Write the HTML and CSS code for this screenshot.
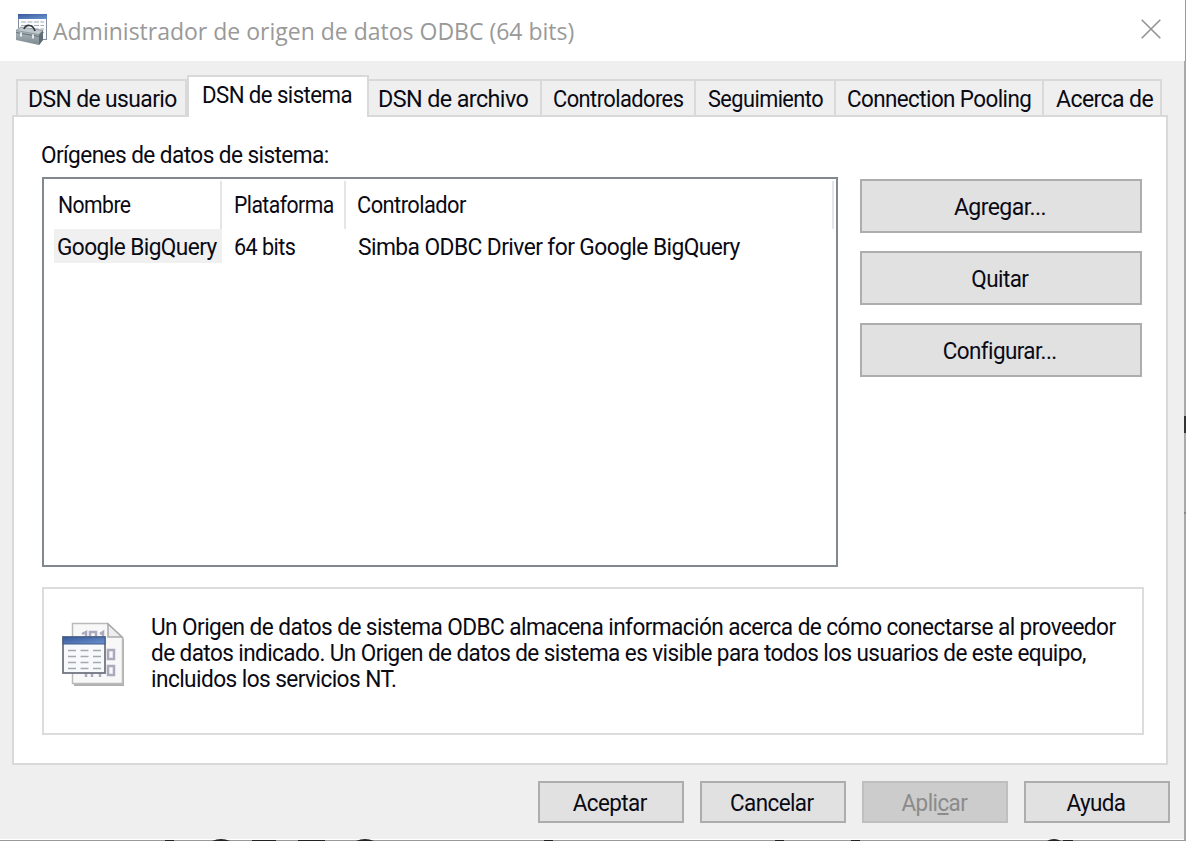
FILE: index.html
```html
<!DOCTYPE html>
<html lang="es">
<head>
<meta charset="utf-8">
<title>Administrador de origen de datos ODBC (64 bits)</title>
<link rel="stylesheet" href="styles.css">
</head>
<body>
<div class="window">
  <header class="titlebar">
    <svg class="app-icon" viewBox="0 0 33 34">
      <defs>
        <linearGradient id="blue" x1="0" x2="1" y1="0" y2="1"><stop offset="0" stop-color="#38599b"/><stop offset="1" stop-color="#6b93cf"/></linearGradient>
        <linearGradient id="steel" x1="0" x2="0" y1="0" y2="1"><stop offset="0" stop-color="#b4c0c5"/><stop offset="1" stop-color="#7d8a90"/></linearGradient>
      </defs>
      <rect x="2.500" y="1.500" width="28" height="25" fill="#fbfcfe" stroke="#858da0"/>
      <rect x="2" y="1" width="29" height="5" fill="url(#blue)"/>
      <path d="M5 9h23M5 12.500h23M5 16h23M5 19.500h23" stroke="#a3a8ad" stroke-dasharray="5 1.500"/>
      <path d="M0 17l5-3 22 3v10l-4 5-23-5z" fill="url(#steel)"/>
      <path d="M0 17.500l5-3.500 22 3.500-4 4z" fill="#bec8cc" stroke="#7d898e" stroke-width=".6"/>
      <path d="M23 21.500l4-4v9.500l-4 5z" fill="#5f6c73"/>
      <path d="M0 19.500l23 4 4-3" stroke="#687479" fill="none"/>
      <path d="M8 16c2-5 9-5 11 2" fill="none" stroke="#333b40" stroke-width="1.700"/>
      <path d="M5 19.500v4M17 21.500v4" stroke="#eef2f4" stroke-width="1.800"/>
    </svg>
    <h1 class="title">Administrador de origen de datos ODBC (64 bits)</h1>
    <svg class="close" viewBox="0 0 20 20"><path d="M.7.7l18.600 18.600M19.300.7L.7 19.300" stroke="#949494" stroke-width="1.600"/></svg>
  </header>
  <main class="body">
    <nav class="tabs">
      <div class="tab t1"><span>DSN de usuario</span></div>
      <div class="tab t2 active"><span>DSN de sistema</span></div>
      <div class="tab t3"><span>DSN de archivo</span></div>
      <div class="tab t4"><span>Controladores</span></div>
      <div class="tab t5"><span>Seguimiento</span></div>
      <div class="tab t6"><span>Connection Pooling</span></div>
      <div class="tab t7"><span>Acerca de</span></div>
    </nav>
    <section class="page">
      <div class="label"><span>Orígenes de datos de sistema:</span></div>
      <div class="sources">
        <div class="list">
          <div class="row head">
            <div class="cell c1"><span>Nombre</span></div>
            <div class="cell c2"><span>Plataforma</span></div>
            <div class="cell c3"><span>Controlador</span></div>
          </div>
          <div class="row item">
            <div class="cell c1"><span>Google BigQuery</span></div>
            <div class="cell c2"><span>64 bits</span></div>
            <div class="cell c3"><span>Simba ODBC Driver for Google BigQuery</span></div>
          </div>
        </div>
        <div class="actions">
          <button class="btn add"><span>Agregar...</span></button>
          <button class="btn"><span>Quitar</span></button>
          <button class="btn"><span>Configurar...</span></button>
        </div>
      </div>
      <div class="info">
        <svg class="info-icon" viewBox="0 0 64 66">
          <path d="M12 3h36l14 14v47H12z" fill="#b0b0b0"/>
          <path d="M10.500 1.500h35l15 14v46h-50z" fill="#f8f8f8" stroke="#bbb" stroke-width="1.500"/>
          <path d="M46 2v13h14z" fill="#eee" stroke="#aaa" stroke-width="1.500"/>
          <g fill="none" stroke="#aaa9bd" stroke-width="2.500"><path d="M20 12l4-2v10M38 12l3-2v10M28 10h6v9h-6zM46 28h6v9h-6zM46 44h6v9h-6zM24 50v5M30 50v5M38 50v5"/></g>
          <rect x="1" y="15" width="42" height="36" fill="#f7fafc" stroke="#707581" stroke-width="1.800"/>
          <rect x="1" y="15" width="42" height="7" fill="url(#blue)" stroke="#405a8c"/>
          <path d="M6 28.500h33M6 34.500h33M6 40.500h33M6 46.500h33" stroke="#a6a9a9" stroke-width="1.700" stroke-dasharray="8 4.500"/>
        </svg>
        <p class="info-text"><span class="l1">Un Origen de datos de sistema ODBC almacena información acerca de cómo conectarse al proveedor</span><span class="l2">de datos indicado. Un Origen de datos de sistema es visible para todos los usuarios de este equipo,</span><span class="l3">incluidos los servicios NT.</span></p>
      </div>
    </section>
    <footer class="footer">
      <button class="btn"><span>Aceptar</span></button>
      <button class="btn"><span>Cancelar</span></button>
      <button class="btn" disabled><span>Apli<u>c</u>ar</span></button>
      <button class="btn"><span>Ayuda</span></button>
    </footer>
  </main>
  <!-- page content behind the dialog, visible along its lower and right edges -->
  <svg class="edge" viewBox="0 0 1186 841">
    <path d="M1185.500 0v61" stroke="#999"/>
    <path d="M1185 61v780" stroke="#a9a9a9" stroke-width="2"/>
    <path d="M0 839.500h1184" stroke="#fff"/>
    <path d="M0 840.500h1186" stroke="#999"/>
    <path d="M165 840.500h9M252 840.500h24M298 840.500h27M544 840.500h9M775 840.500h9M851 840.500h9M1063 840.500h10" stroke="#222"/>
    <path d="M212 841q9-4 18 0zM356 841q9-4 18 0zM1047 841q7-4 14 0z" fill="#222"/>
    <path d="M1185 416v17" stroke="#333" stroke-width="2"/>
    <path d="M1184 513h2" stroke="#888" stroke-width="2"/>
  </svg>
</div>
</body>
</html>
```
FILE: styles.css
```css
* { box-sizing: border-box; }
body { margin: 0; font: 23.5px/26px Roboto, sans-serif; letter-spacing: -0.6px; color: #0a0a14; overflow: hidden; }
.window { position: relative; width: 1186px; height: 841px; background: #efefef; display: flex; flex-direction: column; }
.edge { position: absolute; inset: 0; z-index: 2; width: 1186px; height: 841px; pointer-events: none; }
.titlebar { height: 61px; flex: none; background: #fff; display: flex; padding: 13px 25px 0 16px; }
.app-icon { width: 33px; height: 34px; flex: none; }
.title { margin: 2px 0 0 4px; flex: 1; font: 400 23px/32px "Open Sans", sans-serif; letter-spacing: 0; color: #999; white-space: nowrap; }
.close { width: 20px; height: 20px; margin-top: 6px; flex: none; }
.body { flex: 1; padding: 14px 16px 0 12px; }

/* narrow interface lettering */
.tab span, .label span, .cell span, .btn span, .info-text span { display: inline-block; transform: scaleX(var(--sx, .96)); transform-origin: 0 50%; }
.btn span { transform-origin: 50% 50%; position: relative; top: 1px; }

.tabs { display: flex; align-items: flex-end; padding-left: 4px; height: 42px; position: relative; z-index: 1; }
.tab { flex: none; height: 36px; margin-bottom: 2px; border-top: 2px solid #d9d9d9; border-right: 2px solid #d9d9d9; padding: 5px 0 0 10px; white-space: nowrap; }
.t1 { --sx: .972; width: 171px; border-left: 2px solid #d9d9d9; }
.t2 { --sx: .945; width: 182px; }
.t3 { --sx: .993; width: 173px; padding-left: 9px; }
.t4 { --sx: .93; width: 154px; padding-left: 11px; }
.t5 { --sx: .925; width: 140px; padding-left: 12px; }
.t6 { --sx: .953; width: 208px; padding-left: 11px; }
.t7 { --sx: .98; width: 118px; padding-left: 12px; }
.active { height: 42px; margin: 0; background: #fff; border-left: 2px solid #d9d9d9; padding: 5px 0 0 13px; }
.page { height: 650px; margin-top: -2px; border: 2px solid #d9d9d9; background: #fff; width: 1156px; padding: 25px 22px 0 28px; }
.label { height: 35px; margin-left: -1px; --sx: .963; }
.sources { display: flex; justify-content: space-between; height: 390px; padding-right: 2px; }
.list { width: 796px; border: 2px solid #828790; padding: 2px 2px 0 10px; white-space: nowrap; }
.row { display: flex; }
.head .cell { height: 48px; border-right: 2px solid #e5e5e5; padding-top: 11px; }
.item .cell { height: 34px; padding-top: 5px; }
.c1 { width: 168px; padding-left: 4px; }
.c2 { width: 124px; padding-left: 12px; }
.c3 { width: 488px; padding-left: 12px; }
.head .c1, .head .c2 { --sx: .9; }
.head .c3 { --sx: .93; padding-left: 11px; }
.item .c1 { --sx: .965; background: #f0f0f0; padding-left: 3px; }
.item .c2 { --sx: .92; }
.item .c3 { --sx: .97; }
.actions { display: flex; flex-direction: column; gap: 18px; padding-top: 2px; }
.btn { font: inherit; letter-spacing: inherit; color: inherit; background: #e1e1e1; border: 2px solid #adadad; padding: 0 2px 0 0; --sx: .955; }
.actions .btn { width: 282px; height: 54px; }
.add { --sx: .98; }
.info { margin-top: 20px; height: 148px; border: 2px solid #dcdcdc; display: flex; padding: 25px 0 0 18px; }
.info-icon { width: 64px; height: 66px; margin-top: 8px; flex: none; }
.info-text { margin: 0 0 0 25px; white-space: nowrap; }
.info-text span { display: block; width: max-content; }
.l1 { --sx: .963; }
.l2 { --sx: .959; }
.l3 { --sx: .965; }
.footer { display: flex; justify-content: flex-end; gap: 16px; padding-top: 16px; }
.footer .btn { width: 146px; height: 42px; }
.footer .btn:disabled { background: #ccc; border-color: #bfbfbf; color: #8b8b8b; }
```
